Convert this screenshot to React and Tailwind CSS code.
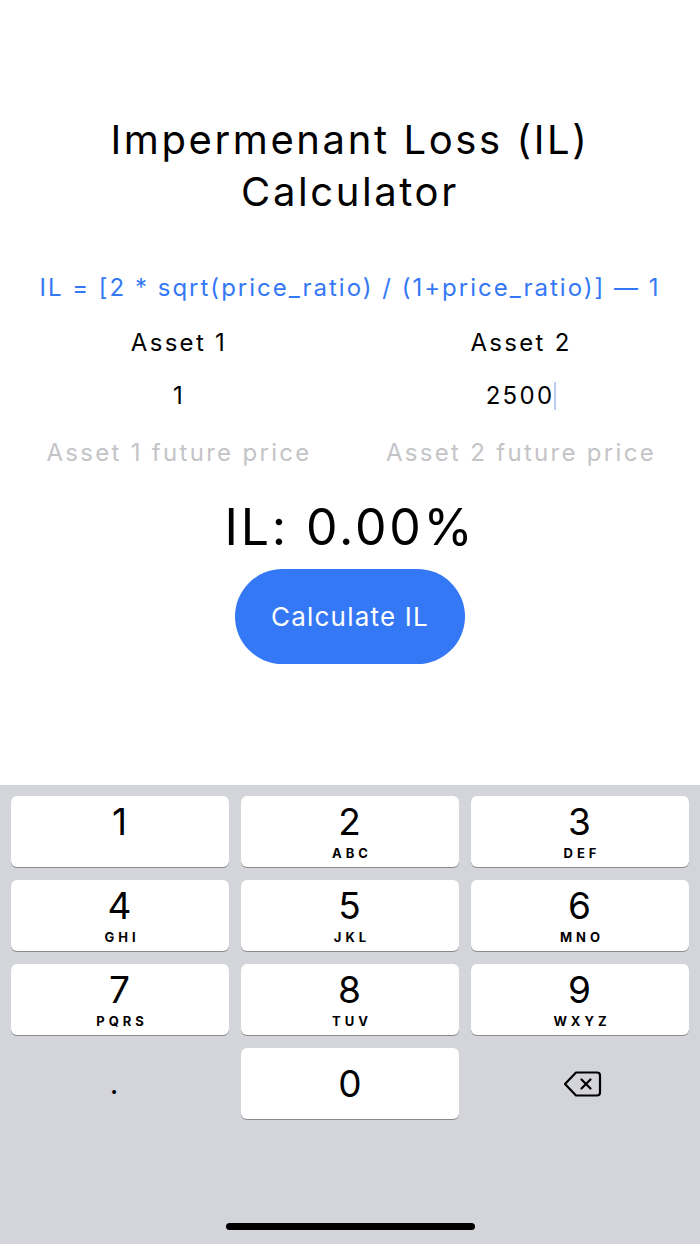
import { useState } from "react";

const keys = [
  { d: "1", l: "" },
  { d: "2", l: "ABC" },
  { d: "3", l: "DEF" },
  { d: "4", l: "GHI" },
  { d: "5", l: "JKL" },
  { d: "6", l: "MNO" },
  { d: "7", l: "PQRS" },
  { d: "8", l: "TUV" },
  { d: "9", l: "WXYZ" },
];

function Key({ d, l }) {
  return (
    <div className="h-[71px] bg-white rounded-[6px] shadow-[0_1px_0_#898a8d] flex flex-col items-center pt-[6px]">
      <span className="text-[37px] leading-[40px] text-black tracking-[1px]">{d}</span>
      {l && (
        <span className="mt-[2px] text-[13px] leading-[18px] font-bold tracking-[4px] text-black pl-[4px]">
          {l}
        </span>
      )}
    </div>
  );
}

function BackspaceIcon() {
  return (
    <svg width="42" height="28" viewBox="0 0 42 28" fill="none">
      <path
        d="M14 2.5h21a3 3 0 0 1 3 3v17a3 3 0 0 1-3 3H14L3 14z"
        stroke="#000"
        strokeWidth="2.2"
        strokeLinejoin="round"
      />
      <path d="M19.5 9.5l9 9M28.5 9.5l-9 9" stroke="#000" strokeWidth="2.2" strokeLinecap="round" />
    </svg>
  );
}

export default function App() {
  const [asset2] = useState("2500");

  return (
    <div className="w-[700px] h-[1244px] bg-white flex flex-col font-['Inter',sans-serif] overflow-hidden">
      {/* Main content */}
      <div className="flex-1 flex flex-col items-center">
        <h1 className="mt-[114px] text-[40px] leading-[52px] tracking-[2.6px] text-black text-center">
          Impermenant Loss (IL)
          <br />
          Calculator
        </h1>

        <p className="mt-[54px] text-[24px] leading-[32px] tracking-[2px] text-[#3478f6] text-center whitespace-nowrap">
          IL = [2 * sqrt(price_ratio) / (1+price_ratio)] — 1
        </p>

        <div className="w-full px-2 grid grid-cols-2 mt-[24px] tracking-[2.3px]">
          <div className="flex flex-col items-center">
            <span className="text-[24px] leading-[30px] text-black">Asset 1</span>
            <span className="mt-[23px] text-[24px] leading-[30px] text-black">1</span>
            <span className="mt-[27px] text-[24px] leading-[30px] text-[#c4c4c7]">
              Asset 1 future price
            </span>
          </div>
          <div className="flex flex-col items-center">
            <span className="text-[24px] leading-[30px] text-black">Asset 2</span>
            <span className="mt-[23px] text-[24px] leading-[30px] text-black flex items-center">
              {asset2}
              <span className="w-[2px] h-[28px] bg-[#b7cff7]" />
            </span>
            <span className="mt-[27px] text-[24px] leading-[30px] text-[#c4c4c7]">
              Asset 2 future price
            </span>
          </div>
        </div>

        <div className="mt-[31px] text-[50px] leading-[56px] tracking-[2.8px] text-black">IL: 0.00%</div>

        <button className="mt-[14px] w-[230px] h-[95px] rounded-full bg-[#3478f6] text-white text-[26px] tracking-[1.2px]">
          Calculate IL
        </button>
      </div>

      {/* Number pad */}
      <div className="h-[459px] bg-[#d4d5da] px-[11px] pt-[11px] flex flex-col">
        <div className="grid grid-cols-3 gap-x-[12px] gap-y-[13px]">
          {keys.map((k) => (
            <Key key={k.d} d={k.d} l={k.l} />
          ))}
          <div className="h-[71px] flex items-center justify-center pr-[12px]">
            <span className="text-[30px] leading-none text-black -mt-[2px]">.</span>
          </div>
          <div className="h-[71px] bg-white rounded-[6px] shadow-[0_1px_0_#898a8d] flex items-center justify-center">
            <span className="text-[37px] leading-[40px] text-black">0</span>
          </div>
          <div className="h-[71px] flex items-center justify-center pl-[6px]">
            <BackspaceIcon />
          </div>
        </div>
        <div className="flex-1 flex items-end justify-center pb-[14px]">
          <div className="w-[249px] h-[7px] rounded-full bg-black" />
        </div>
      </div>
    </div>
  );
}
